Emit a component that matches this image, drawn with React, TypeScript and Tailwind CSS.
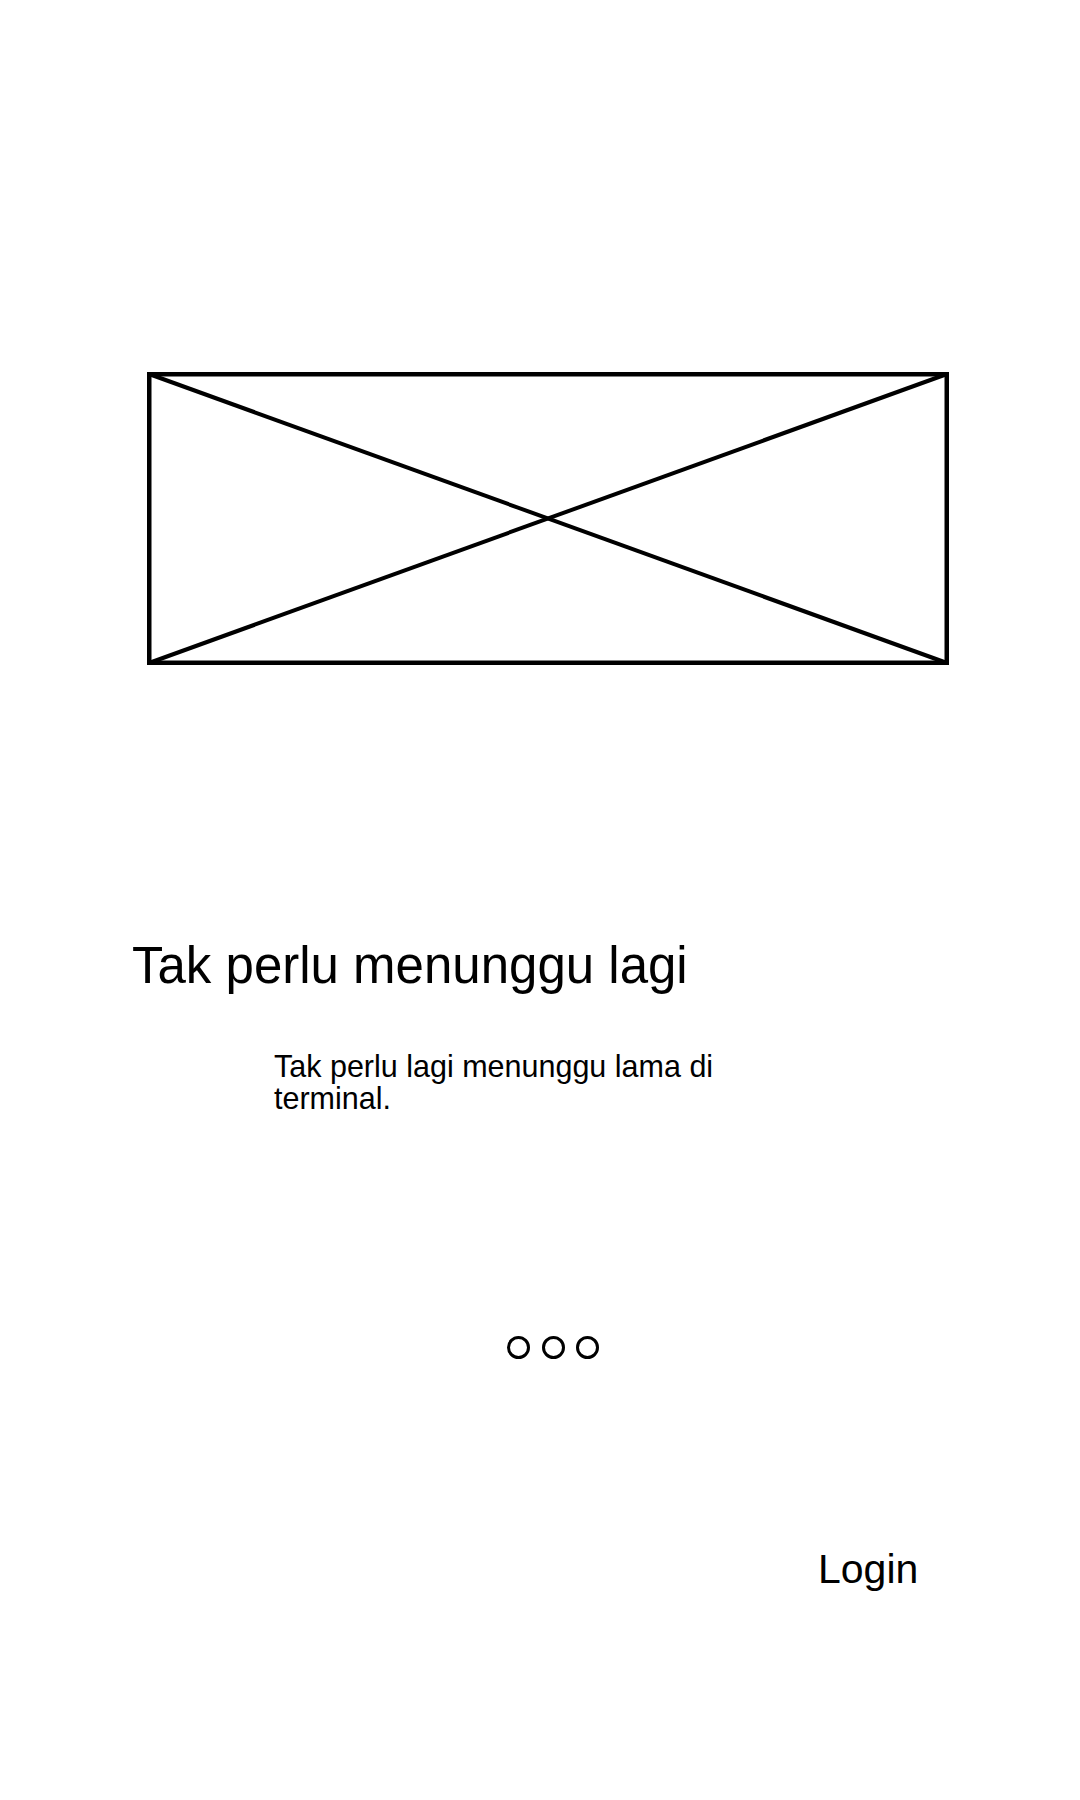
const Placeholder: React.FC = () => (
  <svg width="802" height="293" viewBox="0 0 802 293" className="block">
    <rect x="2.25" y="2.25" width="797.5" height="288.5" fill="none" stroke="#000" strokeWidth="4.5" />
    <line x1="2" y1="2" x2="800" y2="291" stroke="#000" strokeWidth="4" />
    <line x1="2" y1="291" x2="800" y2="2" stroke="#000" strokeWidth="4" />
  </svg>
);

const App: React.FC = () => {
  return (
    <div
      className="w-[1080px] h-[1800px] bg-white text-black flex flex-col items-start"
      style={{ fontFamily: '"Liberation Sans", Arial, sans-serif' }}
    >
      <div className="mt-[372px] ml-[147px]">
        <Placeholder />
      </div>

      <h1 className="mt-[275px] ml-[132px] text-[51px] leading-[51px] font-normal">
        Tak perlu menunggu lagi
      </h1>

      <p className="mt-[59px] ml-[274px] w-[470px] text-[30.5px] leading-[32px]">
        Tak perlu lagi menunggu lama di terminal.
      </p>

      <div className="mt-[222px] ml-[507px] flex gap-[11.5px]">
        <span className="w-[23px] h-[23px] rounded-full border-[3px] border-black" />
        <span className="w-[23px] h-[23px] rounded-full border-[3px] border-black" />
        <span className="w-[23px] h-[23px] rounded-full border-[3px] border-black" />
      </div>

      <button className="mt-[190px] ml-[818px] text-[41px] leading-[41px] bg-transparent">
        Login
      </button>
    </div>
  );
};

export default App;
